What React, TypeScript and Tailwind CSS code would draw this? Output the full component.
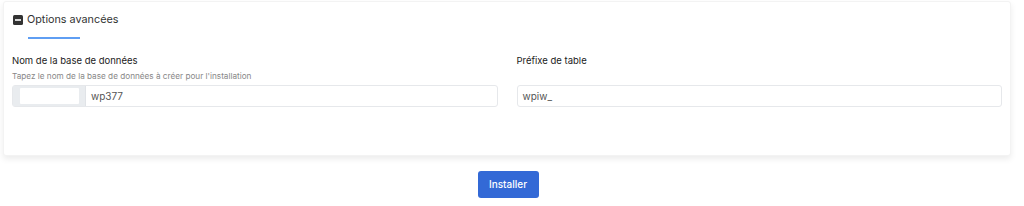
import React from "react";

export default function App() {
  const font = { fontFamily: "Inter, 'Noto Sans', sans-serif" };
  return (
    <div className="w-[1024px] h-[206px] bg-white" style={font}>
      <div className="pt-[1px] pl-[3px] w-[1011px]">
        <div className="bg-white rounded-[3px] shadow-[0_3px_6px_rgba(0,0,0,0.08)] border border-[#f3f3f3] h-[155px] px-[8px]">
          <div className="flex items-center gap-[4px] pt-[11px] pl-[1px]">
            <svg width="10" height="10" viewBox="0 0 10 10">
              <rect x="0" y="0" width="10" height="10" rx="1.5" fill="#333" />
              <rect x="2" y="4.2" width="6" height="1.6" fill="#fff" />
            </svg>
            <span className="text-[10.8px] leading-[14px] text-[#333]">Options avancées</span>
          </div>
          <div className="ml-[16px] mt-[10px] w-[52px] h-[2px] bg-[#5f9ef3]" />
          <div className="grid grid-cols-2 gap-[19px] mt-[16px]">
            <div>
              <div className="text-[9.5px] leading-[12px] text-[#222]">Nom de la base de données</div>
              <div className="text-[8.2px] leading-[10px] text-[#888] mt-[4px]">Tapez le nom de la base de données à créer pour l'installation</div>
              <div className="flex h-[22px] mt-[4px] border border-[#e6e8eb] rounded-[3px]">
                <div className="w-[73px] bg-[#e9ecef] flex items-center justify-center border-r border-[#e0e3e7]">
                  <div className="w-[59px] h-[16px] bg-white rounded-[1px]" />
                </div>
                <div className="flex items-center pl-[5px] text-[10px] text-[#555]">wp377</div>
              </div>
            </div>
            <div>
              <div className="text-[9.5px] leading-[12px] text-[#222]">Préfixe de table</div>
              <div className="h-[10px] mt-[4px]" />
              <div className="flex items-center h-[22px] mt-[4px] border border-[#e6e8eb] rounded-[3px] pl-[5px] text-[10px] text-[#555]">
                wpiw_
              </div>
            </div>
          </div>
        </div>
      </div>
      <div className="flex justify-center mt-[15px] pr-[8px]">
        <button className="w-[61px] h-[27px] bg-[#3369d6] rounded-[3px] text-white text-[10px] font-medium">Installer</button>
      </div>
    </div>
  );
}
